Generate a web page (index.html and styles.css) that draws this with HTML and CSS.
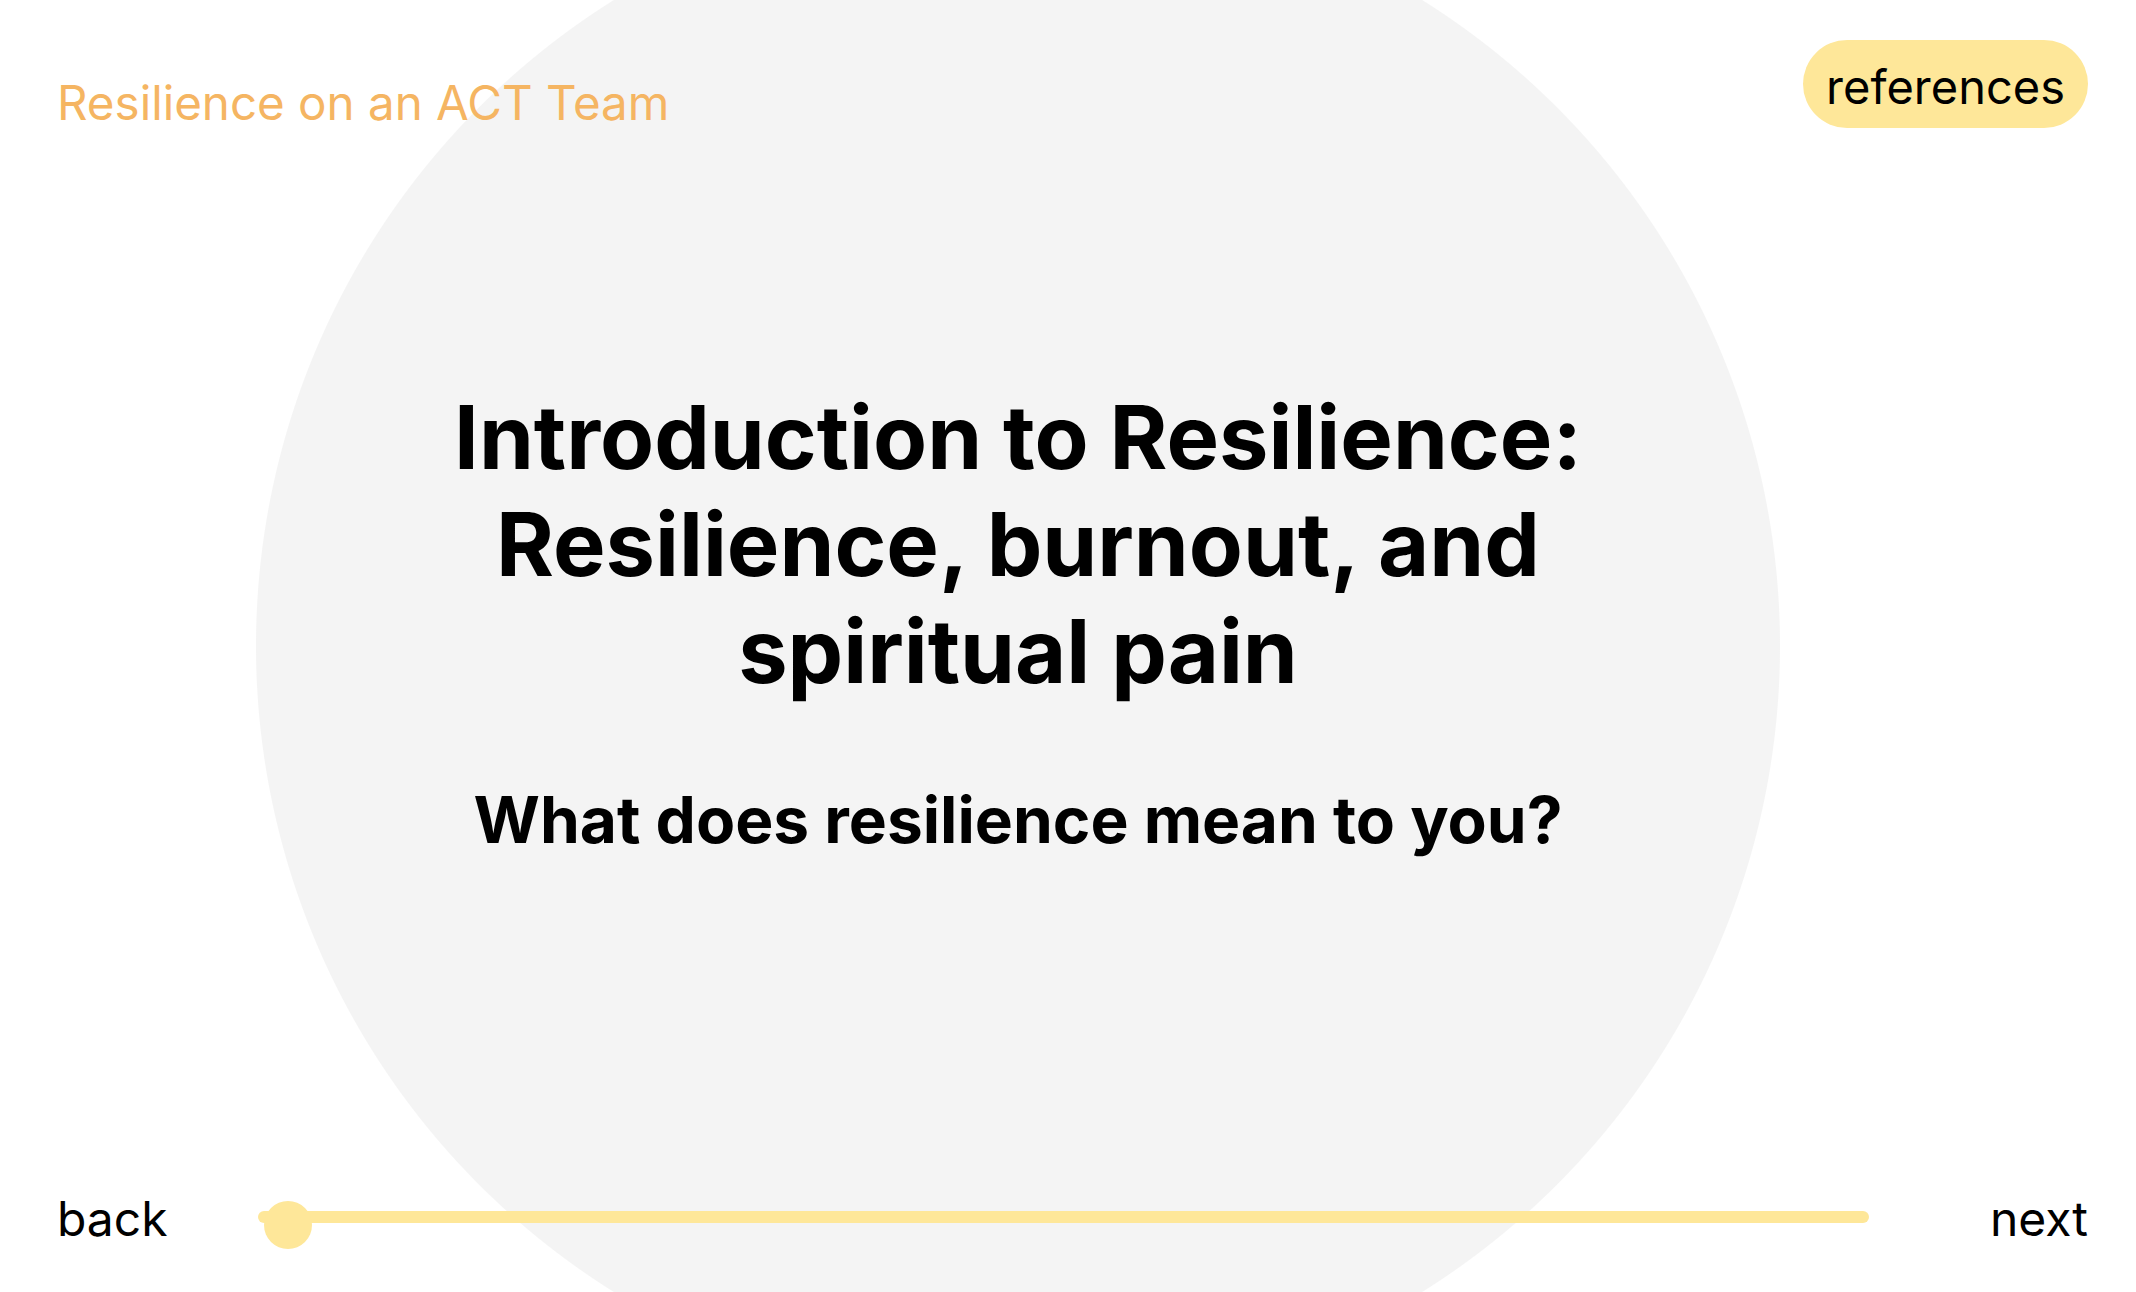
FILE: index.html
```html
<!DOCTYPE html>
<html lang="en">
<head>
<meta charset="utf-8">
<title>Resilience on an ACT Team</title>
<link rel="stylesheet" href="styles.css">
</head>
<body>
<header class="topbar">
  <div class="course-title">Resilience on an ACT Team</div>
  <button class="ref-btn">references</button>
</header>
<main class="stage">
  <h1 class="slide-title">Introduction to Resilience:<br>Resilience, burnout, and<br>spiritual pain</h1>
  <h2 class="slide-question">What does resilience mean to you?</h2>
</main>
<footer class="navbar">
  <span class="nav-link back">back</span>
  <div class="track"><div class="knob"></div></div>
  <span class="nav-link next">next</span>
</footer>
</body>
</html>
```
FILE: styles.css
```css
html, body {
  margin: 0;
  padding: 0;
  overflow: hidden;
}
body {
  width: 2136px;
  height: 1292px;
  position: relative;
  background-color: #ffffff;
  background-image: radial-gradient(circle 762px at 1018px 646px, #f4f4f4 761.5px, #ffffff 762.5px);
  background-repeat: no-repeat;
  font-family: Inter, "Liberation Sans", sans-serif;
  color: #000;
  display: flex;
  flex-direction: column;
}
.topbar {
  display: flex;
  justify-content: space-between;
  align-items: flex-start;
  padding: 40px 48px 0 57px;
  height: 88px;
  flex: none;
}
.course-title {
  margin-top: 34px;
  font-size: 47.5px;
  line-height: normal;
  color: #f5b562;
}
.ref-btn {
  font-family: inherit;
  font-size: 47px;
  line-height: normal;
  color: #000;
  background: #fee799;
  border: none;
  border-radius: 44px;
  height: 88px;
  padding: 4px 23px 0;
  margin: 0;
}
.stage {
  flex: 1;
  min-height: 0;
  width: 1524px;
  margin-left: 256px;
  text-align: center;
  padding-top: 255px;
}
.slide-title {
  margin: 0;
  font-size: 88.3px;
  line-height: 107px;
  font-weight: 700;
}
.slide-question {
  margin: 78px 0 0;
  font-size: 64px;
  line-height: 1.2;
  font-weight: 700;
}
.navbar {
  display: flex;
  align-items: center;
  padding: 0 48px 33px 57px;
  height: 80px;
  flex: none;
}
.nav-link {
  font-size: 48px;
  line-height: 58px;
}
.track {
  flex: 1;
  position: relative;
  height: 12px;
  margin: 0 121px 5px 90px;
  border-radius: 6px;
  background: #fee799;
}
.knob {
  position: absolute;
  left: 6px;
  top: -10px;
  width: 48px;
  height: 48px;
  border-radius: 50%;
  background: #fee799;
}
```
